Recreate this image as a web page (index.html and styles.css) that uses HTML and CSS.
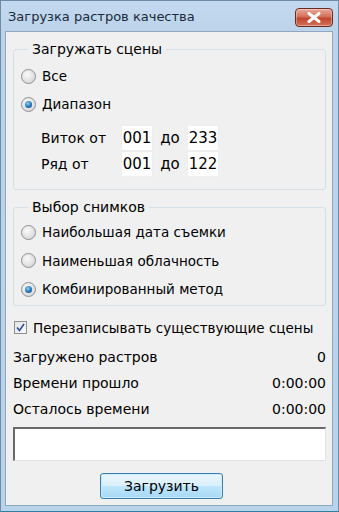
FILE: index.html
```html
<!DOCTYPE html>
<html lang="ru">
<head>
  <meta charset="UTF-8" />
  <title>Загрузка растров качества</title>
  <link rel="stylesheet" href="styles.css">
</head>
<body>
  <div class="window">
    <div class="titlebar">
      <span class="title">Загрузка растров качества</span>
      <button class="close" type="button">
        <svg width="14" height="11" viewBox="0 0 14 11">
          <path d="M2 1.5 L12 9.5 M12 1.5 L2 9.5" stroke="#fff" stroke-width="3" stroke-linecap="round"/>
        </svg>
      </button>
    </div>

    <div class="client">
      <fieldset class="group group-scenes">
        <legend>Загружать сцены</legend>
        <label class="radio"><span class="rb"></span>Все</label>
        <label class="radio"><span class="rb on"></span>Диапазон</label>
        <div class="range">
          <div class="range-row">
            <span class="range-label">Виток от</span>
            <span class="field">001</span>
            <span class="to">до</span>
            <span class="field">233</span>
          </div>
          <div class="range-row">
            <span class="range-label">Ряд от</span>
            <span class="field">001</span>
            <span class="to">до</span>
            <span class="field">122</span>
          </div>
        </div>
      </fieldset>

      <fieldset class="group group-pick">
        <legend>Выбор снимков</legend>
        <label class="radio"><span class="rb"></span>Наибольшая дата съемки</label>
        <label class="radio"><span class="rb"></span>Наименьшая облачность</label>
        <label class="radio"><span class="rb on"></span>Комбинированный метод</label>
      </fieldset>

      <label class="check">
        <span class="cb">
          <svg width="9" height="9" viewBox="0 0 9 9"><path d="M1 4.5 L3.5 7.5 L8 1" fill="none" stroke="#2b4e9c" stroke-width="1.6"/></svg>
        </span>
        Перезаписывать существующие сцены
      </label>

      <div class="stats">
        <div class="stat"><span>Загружено растров</span><span>0</span></div>
        <div class="stat"><span>Времени прошло</span><span>0:00:00</span></div>
        <div class="stat"><span>Осталось времени</span><span>0:00:00</span></div>
      </div>

      <div class="progress"></div>

      <div class="actions">
        <button class="btn" type="button">Загрузить</button>
      </div>
    </div>
  </div>
</body>
</html>
```

FILE: styles.css
```css
body {
  margin: 0;
  padding: 0;
  width: 339px;
  height: 512px;
  overflow: hidden;
  background: #fff;
  font-family: Tahoma, "DejaVu Sans", "Liberation Sans", sans-serif;
}
.window {
  box-sizing: border-box;
  width: 339px;
  height: 512px;
  display: flex;
  flex-direction: column;
  background: linear-gradient(to bottom, #c3d9ef, #bcd3ea 30px, #b9d3eb);
  border: 1px solid #6d8aa6;
  border-bottom-color: #2f7fa0;
  padding: 0 5px 5px 4px;
}
.titlebar {
  height: 30px;
  flex: none;
  display: flex;
  align-items: center;
  justify-content: space-between;
}
.title {
  font-size: 13px;
  color: #1a2a3a;
  padding-left: 3px;
  padding-top: 1px;
}
.close {
  width: 38px;
  height: 19px;
  margin-top: 2px;
  margin-right: 0;
  border: 1px solid #6b2a1f;
  border-radius: 4px;
  background: linear-gradient(to bottom, #e9a99a, #d2705c 45%, #c1462c 55%, #d4715b);
  box-shadow: inset 0 0 0 1px rgba(255, 255, 255, 0.35);
  display: flex;
  align-items: center;
  justify-content: center;
  padding: 0;
}
.client {
  flex: 1;
  background: #f0f0f0;
  border: 1px solid #8fa8c2;
  display: flex;
  flex-direction: column;
  padding: 9px 6px 0 7px;
  font-size: 13.5px;
  color: #000;
}
.group {
  margin: 0;
  border: 1px solid #d5dfe5;
  border-radius: 3px;
  padding: 0 0 0 7px;
  min-width: 0;
}
.group legend {
  padding: 0 4px;
  margin-left: 7px;
  font-size: 14px;
}
.radio {
  display: flex;
  align-items: center;
  gap: 6px;
}
.group-scenes .radio {
  height: 28px;
}
.group-scenes {
  padding-top: 5px;
  padding-bottom: 12px;
}
.group-pick {
  margin-top: 9px;
  padding-top: 3px;
  padding-bottom: 1px;
}
.group-pick .radio {
  height: 28.5px;
}
.rb {
  width: 13px;
  height: 13px;
  border-radius: 50%;
  border: 1px solid #8c8f94;
  background: radial-gradient(circle at 40% 35%, #fafafa, #dcdcdc 70%, #c8c8c8);
  display: inline-flex;
  align-items: center;
  justify-content: center;
  flex: none;
}
.rb.on::after {
  content: "";
  width: 7px;
  height: 7px;
  border-radius: 50%;
  background: radial-gradient(circle at 40% 35%, #8ad0f5, #1a6fb5 60%, #0d3f7a);
}
.range {
  padding-left: 20px;
  margin-top: 7px;
}
.range-row {
  display: flex;
  align-items: center;
  height: 26px;
}
.range-label {
  width: 80px;
  font-size: 14px;
}
.field {
  box-sizing: border-box;
  width: 32px;
  height: 26px;
  background: #fff;
  display: flex;
  align-items: center;
  justify-content: center;
  border: 1px solid #eeeeee;
  font-size: 15px;
}
.to {
  width: 34px;
  text-align: center;
  font-size: 15px;
}
.check {
  display: flex;
  align-items: center;
  gap: 6px;
  margin-top: 14px;
  height: 16px;
}
.cb {
  box-sizing: border-box;
  width: 13px;
  height: 13px;
  border: 1px solid #8e8f8f;
  background: linear-gradient(135deg, #e4e4e4, #fafafa);
  display: inline-flex;
  align-items: center;
  justify-content: center;
  margin-left: 1px;
}
.stats {
  margin-top: 12px;
  display: flex;
  flex-direction: column;
  font-size: 14px;
}
.stat {
  display: flex;
  justify-content: space-between;
  height: 26px;
  line-height: 18px;
}
.progress {
  height: 34px;
  box-sizing: border-box;
  margin-top: 1px;
  background: #fff;
  border: 1px solid #e3e3e3;
  border-top: 2px solid #696969;
  border-left: 2px solid #696969;
}
.actions {
  display: flex;
  justify-content: center;
  margin-top: 12px;
  padding-right: 16px;
}
.btn {
  width: 123px;
  height: 26px;
  font-family: inherit;
  font-size: 14px;
  color: #000;
  border: 1px solid #3c7fb1;
  border-radius: 3px;
  background: linear-gradient(to bottom, #eaf6fd, #d9f0fc 50%, #bee6fd 51%, #a7d9f5);
  box-shadow: inset 0 0 0 1px #c7eafc;
  padding: 0;
}
```
